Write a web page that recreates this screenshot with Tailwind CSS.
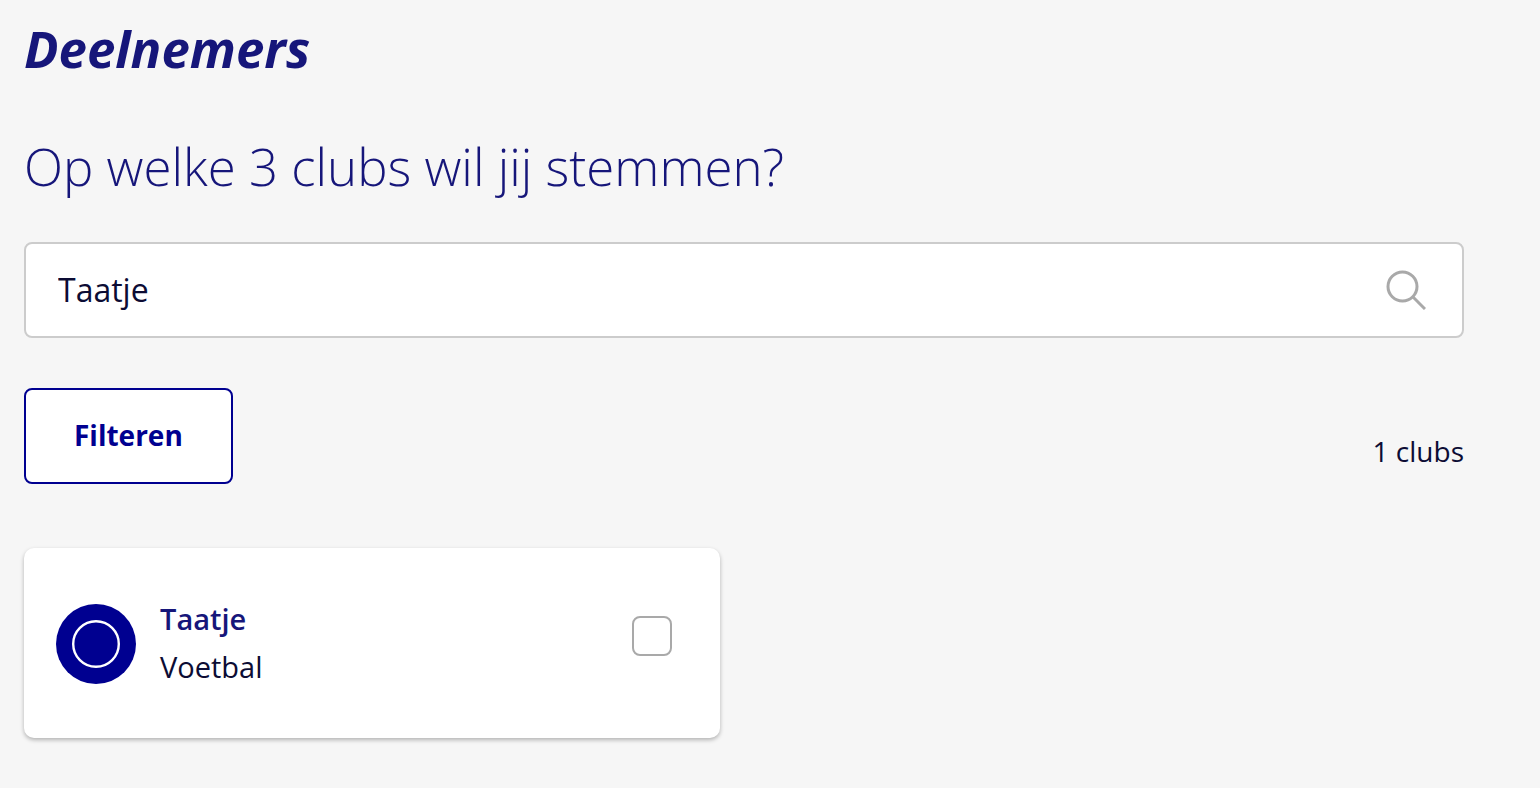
<!DOCTYPE html>
<html lang="nl">
  <head>
    <meta charset="UTF-8" />
    <meta name="viewport" content="width=device-width, initial-scale=1.0" />
    <title>Deelnemers</title>
    <script src="https://cdn.jsdelivr.net/npm/@tailwindcss/browser@4"></script>
  </head>
  <body class="min-h-screen bg-[#f6f6f6] font-['Open_Sans','Noto_Sans',sans-serif] text-[#0c0c34]">
    <main class="pl-6 pr-[76px] pt-[14px] pb-12">
      <h1 class="text-[51px] leading-[68px] font-bold italic text-[#16167a] font-['Noto_Sans',sans-serif]">Deelnemers</h1>
      <h2 class="mt-12 text-[51px] leading-[72px] font-light text-[#16167a]">
        <label for="search">Op welke 3 clubs wil jij stemmen?</label>
      </h2>

      <!-- Search -->
      <form class="mt-10 flex h-24 items-center rounded-lg border-2 border-[#cccccc] bg-white pl-8 pr-9">
        <input class="min-w-0 flex-1 bg-transparent text-[32px] leading-normal focus:outline-none" id="search" type="text" name="search" value="Taatje" autocomplete="off" />
        <button type="submit" aria-label="Zoeken">
          <svg class="block size-10" viewBox="0 0 40 40" fill="none" stroke="#a9a9a9" stroke-width="3">
            <circle cx="16.5" cy="16.5" r="14.5" />
            <path d="M27 27l12 12" />
          </svg>
        </button>
      </form>

      <!-- Filter and result count -->
      <div class="mt-[50px] flex items-start justify-between">
        <button class="h-24 rounded-lg border-2 border-[#000090] bg-white px-12 pb-0.5 text-[28px] font-bold text-[#000090]" type="button">Filteren</button>
        <p class="mt-10 text-[28px] leading-[46px]">1 clubs</p>
      </div>

      <!-- Clubs -->
      <ul class="mt-16 grid grid-cols-2 gap-12">
        <li class="flex items-start rounded-[10px] bg-white pl-8 pr-12 pt-[47px] pb-[47px] shadow-[0_2px_4px_rgba(0,0,0,0.28)]">
          <svg class="mt-[9px] size-20 shrink-0" viewBox="0 0 80 80">
            <circle cx="40" cy="40" r="40" fill="#000090" />
            <circle cx="40" cy="40" r="22.8" fill="none" stroke="#fff" stroke-width="2.4" />
          </svg>
          <label class="ml-6 flex-1 text-[29px] leading-[48px]" for="club">
            <strong class="block font-semibold text-[#16167a]">Taatje</strong>
            Voetbal
          </label>
          <input class="mt-[21px] size-10 shrink-0 appearance-none rounded-lg border-2 border-[#a9a9a9] bg-white checked:bg-[#000090]" id="club" type="checkbox" name="club" />
        </li>
      </ul>
    </main>
  </body>
</html>
